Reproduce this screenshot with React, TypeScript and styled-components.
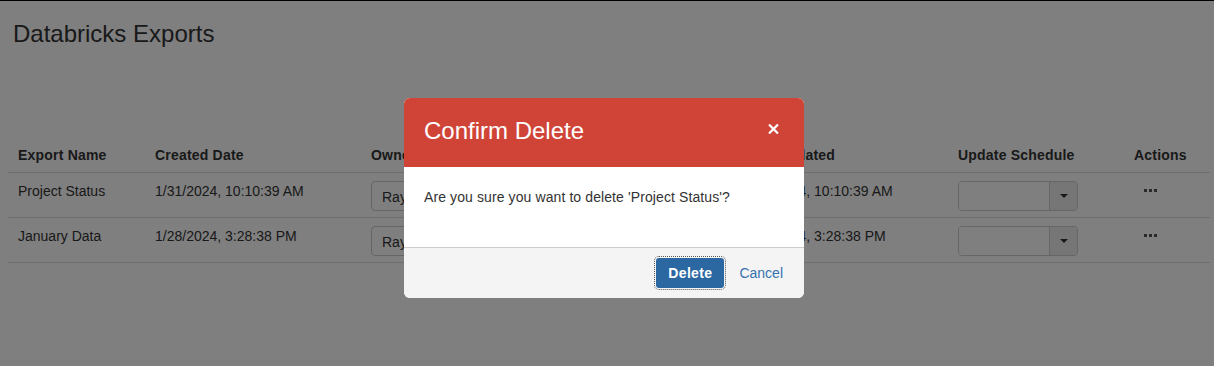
import React from "react";
import styled, { createGlobalStyle } from "styled-components";

const GlobalStyle = createGlobalStyle`
  * { margin: 0; padding: 0; box-sizing: border-box; }
  html, body, #root {
    width: 100%;
    height: 100%;
    background: #fff;
    font-family: "Liberation Sans", Arial, sans-serif;
    color: #333;
  }
`;

const Page = styled.div`
  min-height: 100%;
  border-top: 1px solid #000;
  padding: 0 4px 0 8px;
`;

const Title = styled.h3`
  margin: 20px 0 0 5px;
  font-size: 24px;
  font-weight: 400;
  line-height: 1.1;
`;

const Table = styled.table`
  margin-top: 89px;
  width: 1202px;
  table-layout: fixed;
  border-collapse: collapse;
  font-size: 14px;
  line-height: 20px;

  th {
    text-align: left;
    font-weight: 700;
    letter-spacing: 0.2px;
    padding: 9px 10px 7px;
    border-bottom: 1px solid #ddd;
  }

  td {
    vertical-align: top;
    padding: 8px 10px 6px;
    border-bottom: 1px solid #ddd;
  }
`;

const OwnerSelect = styled.div`
  width: 200px;
  height: 30px;
  padding: 5px 10px;
  border: 1px solid #ccc;
  border-radius: 4px;
  background: #fff;
  white-space: nowrap;
`;

const Combo = styled.div`
  display: flex;
  width: 120px;
  height: 30px;
  border: 1px solid #ccc;
  border-radius: 4px;
  overflow: hidden;
`;

const ComboInput = styled.div`
  flex: 1;
  background: #fff;
`;

const ComboButton = styled.div`
  width: 28px;
  display: flex;
  align-items: center;
  justify-content: center;
  border-left: 1px solid #ccc;
  background: #ececec;

  &::after {
    content: "";
    border-left: 4px solid transparent;
    border-right: 4px solid transparent;
    border-top: 4px solid #333;
  }
`;

const MoreButton = styled.button`
  border: 0;
  background: none;
  padding: 8px 10px;
  display: flex;
  cursor: pointer;
`;

const Overlay = styled.div`
  position: fixed;
  inset: 0;
  background: rgba(0, 0, 0, 0.5);
  display: flex;
  justify-content: center;
  align-items: flex-start;
  padding: 98px 6px 0 0;
`;

const Modal = styled.div`
  width: 400px;
  background: #fff;
  border-radius: 6px;
  overflow: hidden;
`;

const ModalHeader = styled.div`
  display: flex;
  align-items: center;
  justify-content: space-between;
  height: 69px;
  padding: 0 25px 3px 20px;
  background: #d04437;
  color: #fff;

  h4 {
    font-size: 24px;
    font-weight: 400;
    line-height: 1.1;
  }
`;

const CloseButton = styled.button`
  border: 0;
  background: none;
  display: flex;
  margin-bottom: 4px;
  cursor: pointer;
`;

const ModalBody = styled.div`
  padding: 20px 20px 40px;
  font-size: 14px;
  line-height: 20px;
  letter-spacing: 0.1px;
`;

const ModalFooter = styled.div`
  display: flex;
  justify-content: flex-end;
  align-items: center;
  gap: 3px;
  padding: 10px 9px 10px 10px;
  border-top: 1px solid #ccc;
  background: #f4f4f4;
`;

const Button = styled.button<{ $primary?: boolean }>`
  height: 30px;
  padding: 5px 12px;
  border-radius: 3px;
  font-family: inherit;
  font-size: 14px;
  line-height: 20px;
  cursor: pointer;
  border: 0;
  background: ${({ $primary }) => ($primary ? "#2b68a2" : "transparent")};
  color: ${({ $primary }) => ($primary ? "#fff" : "#3572b0")};
  font-weight: ${({ $primary }) => ($primary ? 700 : 400)};
  letter-spacing: ${({ $primary }) => ($primary ? "0.35px" : "0")};
  outline: ${({ $primary }) => ($primary ? "1px dotted #555" : "none")};
  outline-offset: 1px;
`;

const rows = [
  { name: "Project Status", created: "1/31/2024, 10:10:39 AM", owner: "Ray Johnson" },
  { name: "January Data", created: "1/28/2024, 3:28:38 PM", owner: "Ray Johnson" },
];

const Dots = () => (
  <svg width="13" height="3" viewBox="0 0 13 3">
    <rect x="0" y="0" width="3" height="3" fill="#555" />
    <rect x="5" y="0" width="3" height="3" fill="#555" />
    <rect x="10" y="0" width="3" height="3" fill="#555" />
  </svg>
);

const App = () => {
  return (
    <>
      <GlobalStyle />
      <Page>
        <Title>Databricks Exports</Title>
        <Table>
          <colgroup>
            <col style={{ width: 137 }} />
            <col style={{ width: 216 }} />
            <col style={{ width: 373 }} />
            <col style={{ width: 214 }} />
            <col style={{ width: 176 }} />
            <col style={{ width: 86 }} />
          </colgroup>
          <thead>
            <tr>
              <th>Export Name</th>
              <th>Created Date</th>
              <th>Owner</th>
              <th>Last Updated</th>
              <th>Update Schedule</th>
              <th>Actions</th>
            </tr>
          </thead>
          <tbody>
            {rows.map((r) => (
              <tr key={r.name}>
                <td>{r.name}</td>
                <td>{r.created}</td>
                <td>
                  <OwnerSelect>{r.owner}</OwnerSelect>
                </td>
                <td>{r.created}</td>
                <td>
                  <Combo>
                    <ComboInput />
                    <ComboButton />
                  </Combo>
                </td>
                <td>
                  <MoreButton aria-label="Actions">
                    <Dots />
                  </MoreButton>
                </td>
              </tr>
            ))}
          </tbody>
        </Table>
      </Page>

      <Overlay>
        <Modal>
          <ModalHeader>
            <h4>Confirm Delete</h4>
            <CloseButton aria-label="Close">
              <svg width="11" height="10" viewBox="0 0 11 10">
                <path d="M1 0.5 L10 9.5 M10 0.5 L1 9.5" stroke="#fff" strokeWidth="2.2" />
              </svg>
            </CloseButton>
          </ModalHeader>
          <ModalBody>Are you sure you want to delete 'Project Status'?</ModalBody>
          <ModalFooter>
            <Button $primary>Delete</Button>
            <Button>Cancel</Button>
          </ModalFooter>
        </Modal>
      </Overlay>
    </>
  );
};

export default App;
